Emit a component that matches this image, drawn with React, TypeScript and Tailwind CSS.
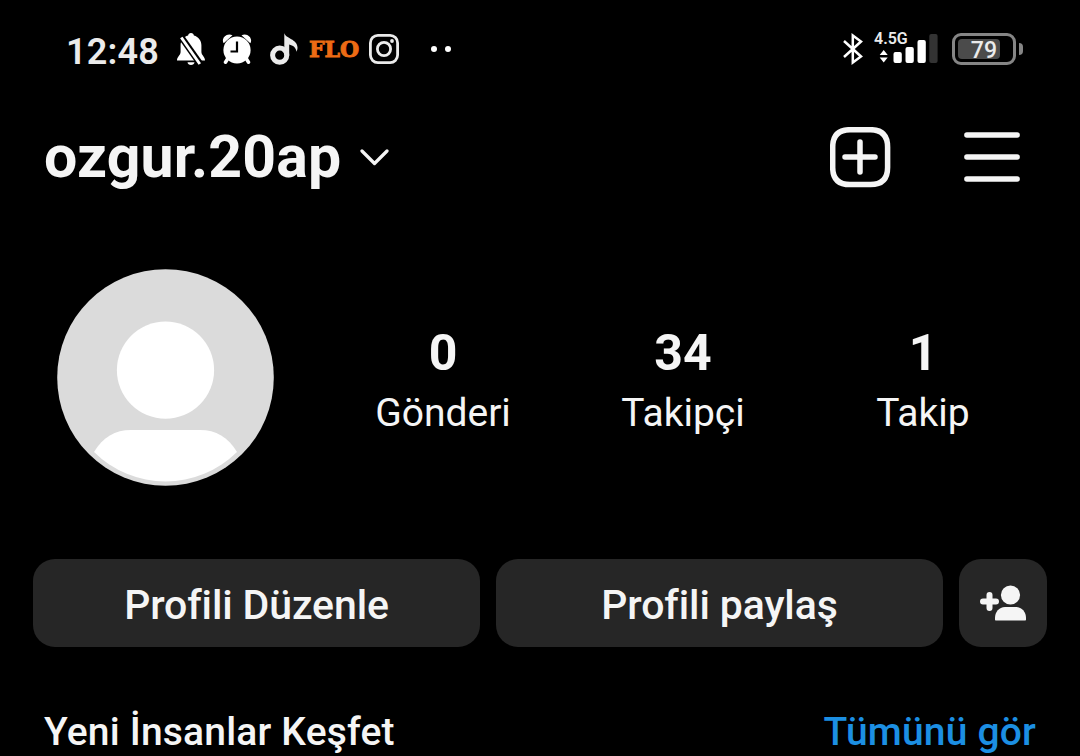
const stats = [
  { value: "0", label: "Gönderi" },
  { value: "34", label: "Takipçi" },
  { value: "1", label: "Takip" },
];

function StatusBar() {
  return (
    <div className="flex h-[98px] items-center pl-[66px] pr-[57px] text-[#ebebeb]">
      <span className="w-[111px] pt-[6px] text-[36px] leading-none font-semibold tracking-[0.2px] whitespace-nowrap">12:48</span>

      {/* Muted bell */}
      <svg width="28" height="32" viewBox="0 0 28 32" className="shrink-0" fill="#fff">
        <path d="M14 0c1.700 0 2.700 1 2.900 2.600 4.600 1.300 7.500 5.200 7.500 10v6.500c0 3.200 3.600 4.600 3.600 8.400H0c0-3.800 3.600-5.200 3.600-8.400v-6.500c0-4.800 2.900-8.700 7.500-10C11.300 1 12.300 0 14 0z" />
        <path d="M10.500 29.300h7c-.3 1.700-1.600 2.700-3.500 2.700s-3.200-1-3.500-2.700z" />
        <path d="M3.500 3 24 32" stroke="#000" strokeWidth="6.400" />
        <path d="M4.300 4.500 22.800 31" stroke="#fff" strokeWidth="2.900" />
      </svg>

      {/* Alarm clock */}
      <svg width="30" height="30" viewBox="0 0 30 30" className="ml-[17px] shrink-0" fill="#fff">
        <path d="M1.700 9.300C-1.200 5 4-1.800 10.500 1.200zM28.300 9.300C31.200 5 26-1.800 19.500 1.200z" />
        <path d="m5.500 25-2 3.200M24.500 25l2 3.200" stroke="#fff" strokeWidth="3.500" strokeLinecap="round" />
        <circle cx="15" cy="16" r="13.600" />
        <path d="M15 7.500v10H8.500" fill="none" stroke="#000" strokeWidth="2.200" />
      </svg>

      {/* Music note */}
      <svg width="28" height="32" viewBox="0 0 28 32" className="ml-[18px] shrink-0" fill="none">
        <circle cx="9.700" cy="22.200" r="7.100" stroke="#ebebeb" strokeWidth="5" />
        <path d="M14.300 0c1 5.500 13.200 6 13.200 14.500 0 1.800-.4 3-.9 4.200-.8-4.300-3.500-6.300-7.400-7.200v11h-4.900z" fill="#ebebeb" />
      </svg>

      <span className="ml-[11px] w-[60px] text-[22px] leading-none font-bold text-[#ed6b14] font-['DejaVu_Serif',serif] [-webkit-text-stroke:0.9px_#ed6b14]">FLO</span>

      {/* Camera */}
      <svg width="30" height="30" viewBox="0 0 30 30" className="shrink-0" fill="none" stroke="#ebebeb" strokeWidth="2.800">
        <rect x="1.400" y="1.400" width="27.200" height="27.200" rx="7.500" />
        <circle cx="15" cy="15" r="6.600" />
        <circle cx="23" cy="7" r="1.900" fill="#ebebeb" stroke="none" />
      </svg>

      <div className="ml-8 flex gap-2">
        <span className="size-[6px] rounded-full bg-white" />
        <span className="size-[6px] rounded-full bg-white" />
      </div>

      <svg width="20" height="32" viewBox="0 0 20 32" className="ml-auto shrink-0" fill="none" stroke="#fff" strokeWidth="2.500">
        <path d="M1 8 18 23.500 9.800 29.500V2.500L18 8.500 1 24" />
      </svg>

      <div className="relative ml-[11px] h-[32px] w-[64px]">
        <svg width="64" height="32" viewBox="0 0 64 32" fill="#fff">
          <path d="M9.700 17 13.700 22H5.700zM9.700 29.500 13.700 24.500H5.700z" />
          <rect x="19.500" y="19" width="8.300" height="11" rx="2" />
          <rect x="31.500" y="14" width="8.300" height="16" rx="2" />
          <rect x="43.500" y="7" width="8.300" height="23" rx="2" />
          <rect x="55.300" y="1" width="8.300" height="29" rx="2" fill="#333" />
        </svg>
        <span className="absolute top-[-2px] left-0 text-[16px] leading-none font-semibold">4.5G</span>
      </div>

      {/* Battery */}
      <div className="ml-[14px] flex items-center gap-[3px]">
        <div className="flex h-8 w-16 items-center rounded-[9px] border-3 border-[#858585] pl-[3px]">
          <div className="flex h-5 w-[42px] items-center justify-end rounded-[4px] bg-[#4b4b4b] pt-[2px] pr-[3px] text-[23px] leading-none font-medium">
            <span>79</span>
          </div>
        </div>
        <span className="h-3 w-1 rounded-r-full bg-[#858585]" />
      </div>
    </div>
  );
}

function Header() {
  return (
    <header className="flex h-[118px] items-center pr-[60px] pl-[44px]">
      <h1 className="w-[296px] pb-[2px] text-[59px] leading-none font-bold tracking-[0.15px] whitespace-nowrap">ozgur.20ap</h1>
      <svg width="30" height="18" viewBox="0 0 30 18" className="ml-[20px] shrink-0" fill="none" stroke="#f5f5f5" strokeWidth="3.200" strokeLinecap="round" strokeLinejoin="round">
        <path d="M2 3 14.500 15.500 27 3" />
      </svg>
      <svg width="61" height="61" viewBox="0 0 61 61" className="ml-auto shrink-0" fill="none" stroke="#f5f5f5" strokeWidth="5.500" strokeLinecap="round">
        <path d="M20 2.700H40.500Q57.600 2.700 57.600 20V40.500Q57.600 57.600 40.500 57.600H20Q2.700 57.600 2.700 40.500V20Q2.700 2.700 20 2.700Z" />
        <path d="M30 15v30M15 30h30" />
      </svg>
      <svg width="56" height="50" viewBox="0 0 56 50" className="ml-[73px] shrink-0" stroke="#f5f5f5" strokeWidth="5.500" strokeLinecap="round">
        <path d="M2.900 3h50.200M2.900 25h50.200M2.900 47h50.200" />
      </svg>
    </header>
  );
}

function Avatar() {
  return (
    <svg width="217" height="217" viewBox="0 0 217 217" className="shrink-0">
      <circle cx="108.500" cy="108.500" r="108.300" fill="#dbdbdb" />
      <circle cx="108.500" cy="101.200" r="48.600" fill="#fff" />
      <path d="M37 183C46 168 58 161 74 161H143C159 161 171 168 180 183A101.500 101.500 0 0 1 37 183Z" fill="#fff" />
    </svg>
  );
}

export default function App() {
  return (
    <main className="h-[756px] w-[1080px] overflow-hidden bg-black text-[#f5f5f5] font-['Roboto',sans-serif] [font-variant-ligatures:none]">
      <StatusBar />
      <Header />

      <section className="mt-[53px] flex h-[217px] pl-[57px]">
        <Avatar />
        <div className="ml-[49px] grid w-[720px] grid-cols-3 pt-[59px] text-center">
          {stats.map((s) => (
            <div key={s.label}>
              <p className="text-[50px] leading-[50px] font-bold">{s.value}</p>
              <p className="mt-4 text-[39px] leading-[39px]">{s.label}</p>
            </div>
          ))}
        </div>
      </section>

      <div className="mt-[73px] flex h-[88px] gap-4 px-[33px] text-[41px] leading-none font-medium tracking-[-0.12px]">
        <button className="w-[447px] rounded-[22px] bg-[#262626] pt-1">Profili Düzenle</button>
        <button className="w-[447px] rounded-[22px] bg-[#262626] pt-1">Profili paylaş</button>
        <button className="flex w-[88px] items-center justify-center rounded-[22px] bg-[#262626]" aria-label="Kişi ekle">
          <svg width="46" height="36" viewBox="0 0 46 36" fill="#f5f5f5">
            <path d="M9.500 10v13M3 16.500h13" stroke="#f5f5f5" strokeWidth="6" strokeLinecap="round" />
            <circle cx="30.500" cy="10" r="9.600" />
            <path d="M25 22h11c6 0 10 5 10 11v1.500c0 .6-.4 1-1 1H16c-.6 0-1-.4-1-1V33c0-6 4-11 10-11z" />
          </svg>
        </button>
      </div>

      <div className="mt-[65px] flex justify-between pr-[44px] pl-[44px] text-[39px] leading-[40px] font-medium tracking-[0.18px] whitespace-nowrap">
        <h2>Yeni İnsanlar Keşfet</h2>
        <a className="text-[#1c8fe3]">Tümünü gör</a>
      </div>
    </main>
  );
}
